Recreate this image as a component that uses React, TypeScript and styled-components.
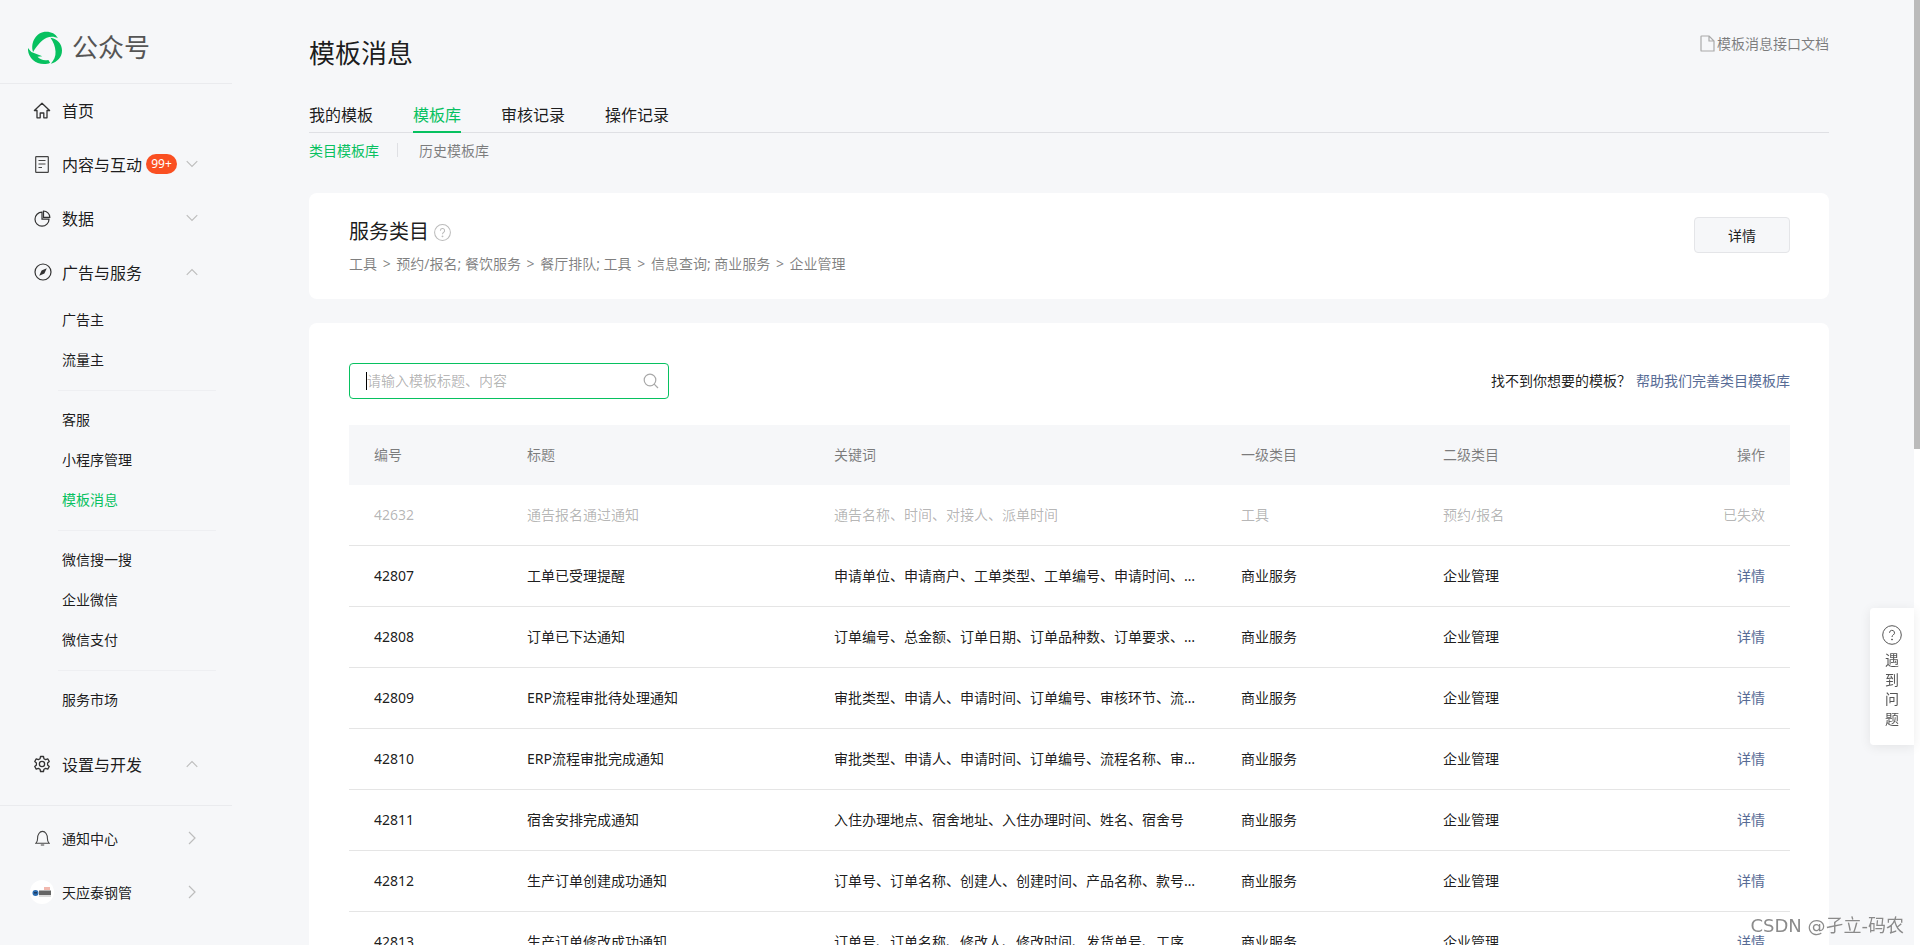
import React from "react";
import styled, { createGlobalStyle } from "styled-components";

const Global = createGlobalStyle`
  html, body { margin: 0; padding: 0; height: 100%; overflow: hidden; background: #f6f7f9; }
  body { font-family: "Noto Sans", "Noto Sans CJK SC", sans-serif; font-size: 14px; color: rgba(0,0,0,.9); }
  * { box-sizing: border-box; }
`;

const Shell = styled.div`
  display: flex;
  height: 100vh;
  overflow: hidden;
`;
const Sidebar = styled.aside`
  flex: 0 0 232px;
  display: flex;
  flex-direction: column;
`;
const Brand = styled.div`
  height: 84px;
  padding: 11px 0 0 28px;
  display: flex;
  align-items: center;
  gap: 10px;
  border-bottom: 1px solid #eaebee;
  font-size: 26px;
  color: #555;
  line-height: 1;
`;
const NavRow = styled.div`
  height: 54px;
  display: flex;
  align-items: center;
  padding: 0 0 2px 30px;
  font-size: ${(p: { $small?: boolean }) => (p.$small ? "14px" : "16px")};
  position: relative;
`;
const NavIcon = styled.span`
  width: 24px;
  height: 24px;
  display: flex;
  align-items: center;
  justify-content: center;
  margin-right: 8px;
  color: #333;
`;
const Chevron = styled.span`
  margin-left: auto;
  margin-right: 34px;
  width: 12px;
  display: flex;
  justify-content: center;
  color: #bdbdbd;
`;
const Badge = styled.span`
  margin-left: 4px;
  height: 20px;
  width: 31px;
  border-radius: 10px;
  background: #fa5022;
  color: #fff;
  font-size: 12px;
  line-height: 20px;
  text-align: center;
`;
const SubGroup = styled.div`
  margin: 0 16px 0 58px;
  padding: 0 0 10px;
  & + & {
    border-top: 1px solid #eeeff2;
    padding-top: 9px;
  }
`;
const SubItem = styled.div<{ $active?: boolean }>`
  height: 40px;
  line-height: 40px;
  padding-left: 4px;
  font-size: 14px;
  color: ${(p) => (p.$active ? "#07c160" : "rgba(0,0,0,.9)")};
`;
const SubList = styled.div`
  padding-bottom: 8px;
`;
const SideDivider = styled.div`
  height: 1px;
  background: #eaebee;
  margin: 13px 0 6px;
`;

const Main = styled.main`
  flex: 1;
  min-width: 0;
  padding: 0 85px 0 77px;
`;
const PageHead = styled.div`
  display: flex;
  justify-content: space-between;
  padding-top: 34px;
  height: 92px;
`;
const PageTitle = styled.h1`
  margin: 0;
  font-size: 26px;
  font-weight: 400;
  line-height: 39px;
`;
const DocLink = styled.a`
  display: flex;
  align-items: center;
  gap: 2px;
  height: 18px;
  font-size: 14px;
  color: rgba(0,0,0,.5);
`;
const TabBar = styled.div`
  display: flex;
  gap: 40px;
  height: 41px;
  border-bottom: 1px solid #dfe0e4;
`;
const Tab = styled.div<{ $active?: boolean }>`
  height: 41px;
  line-height: 47px;
  font-size: 16px;
  color: ${(p) => (p.$active ? "#07c160" : "rgba(0,0,0,.9)")};
  border-bottom: ${(p) => (p.$active ? "2px solid #07c160" : "none")};
`;
const SubTabs = styled.div`
  display: flex;
  align-items: center;
  height: 37px;
  padding-bottom: 3px;
  font-size: 14px;
`;
const SubTab = styled.span<{ $active?: boolean }>`
  color: ${(p) => (p.$active ? "#07c160" : "rgba(0,0,0,.5)")};
`;
const SubSep = styled.span`
  width: 1px;
  height: 14px;
  background: #dfe0e4;
  margin: 0 21px 0 18px;
`;
const Card = styled.section`
  background: #fff;
  border-radius: 8px;
  padding: 0 39px 0 40px;
`;
const CategoryCard = styled(Card)`
  margin-top: 23px;
  height: 106px;
  display: flex;
  align-items: flex-start;
  justify-content: space-between;
`;
const CategoryText = styled.div`
  padding-top: 23px;
`;
const CategoryTitle = styled.div`
  display: flex;
  align-items: center;
  gap: 5px;
  font-size: 20px;
  line-height: 32px;
`;
const Crumbs = styled.div`
  margin-top: 6px;
  font-size: 14px;
  line-height: 20px;
  color: rgba(0,0,0,.5);
`;
const Gt = styled.span`
  margin: 0 2px;
`;
const Button = styled.button`
  margin-top: 24px;
  width: 96px;
  height: 36px;
  background: #f6f7f9;
  border: 1px solid #e4e5e8;
  border-radius: 4px;
  font: inherit;
  font-size: 14px;
  color: rgba(0,0,0,.9);
`;
const ListCard = styled(Card)`
  margin-top: 24px;
  padding-top: 40px;
`;
const Toolbar = styled.div`
  display: flex;
  justify-content: space-between;
  align-items: center;
  height: 36px;
`;
const SearchBox = styled.div`
  width: 320px;
  height: 36px;
  border: 1px solid #07c160;
  border-radius: 4px;
  display: flex;
  align-items: center;
  padding: 0 9px 0 16px;
  color: #aaa;
`;
const Caret = styled.span`
  flex: none;
  width: 1px;
  height: 18px;
  background: #000;
`;
const SearchInput = styled.input`
  flex: 1;
  min-width: 0;
  border: 0;
  outline: 0;
  padding: 0 0 2px;
  background: transparent;
  font: inherit;
  font-size: 14px;
  &::placeholder { color: rgba(0,0,0,.3); }
`;
const Hint = styled.div`
  font-size: 14px;
  padding-bottom: 2px;
`;
const HelpLink = styled.a`
  color: #576b95;
  margin-left: 5px;
`;
const Table = styled.div`
  margin-top: 26px;
`;
const gridCols = "153px 307px 407px 202px 1fr 100px";
const HeadRow = styled.div`
  display: grid;
  grid-template-columns: ${gridCols};
  align-items: center;
  height: 60px;
  padding: 0 25px 2px;
  background: #f6f7f9;
  color: rgba(0,0,0,.5);
`;
const Row = styled.div<{ $off?: boolean }>`
  display: grid;
  grid-template-columns: ${gridCols};
  align-items: center;
  height: 61px;
  padding: 0 25px 2px;
  border-bottom: 1px solid #e5e5e5;
  color: ${(p) => (p.$off ? "rgba(0,0,0,.3)" : "rgba(0,0,0,.9)")};
`;
const Keywords = styled.div`
  max-width: 362px;
  overflow: hidden;
  white-space: nowrap;
  text-overflow: ellipsis;
`;
const Action = styled.div`
  text-align: right;
`;
const ActionLink = styled.a`
  color: #576b95;
`;

const Rail = styled.div`
  flex: 0 0 6px;
  background: #fff;
`;
const Thumb = styled.div`
  height: 449px;
  background: #bbb;
`;
const HelpWidget = styled.div`
  position: fixed;
  right: 6px;
  top: 608px;
  width: 44px;
  height: 137px;
  background: #fff;
  border-radius: 4px 0 0 4px;
  box-shadow: 0 2px 12px rgba(0,0,0,.08);
  display: flex;
  flex-direction: column;
  align-items: center;
  padding-top: 17px;
  color: #555;
`;
const HelpWord = styled.div`
  margin-top: 5px;
  width: 14px;
  font-size: 14px;
  line-height: 19.5px;
  text-align: center;
`;
const Watermark = styled.div`
  position: fixed;
  right: 16px;
  top: 913px;
  font-family: "DejaVu Sans", "Noto Sans CJK SC", sans-serif;
  font-size: 18px;
  line-height: 26px;
  color: rgba(90,90,90,.7);
  text-shadow: 0 0 2px rgba(255,255,255,.9);
  white-space: nowrap;
`;

const ChevronDown = () => (
  <svg width="13" height="8" viewBox="0 0 13 8" fill="none" stroke="currentColor" strokeWidth="1.2"><path d="M.8 1l5.7 5.7L12.2 1" /></svg>
);
const ChevronUp = () => (
  <svg width="13" height="8" viewBox="0 0 13 8" fill="none" stroke="currentColor" strokeWidth="1.2"><path d="M.8 7l5.7-5.7L12.2 7" /></svg>
);
const ChevronRight = () => (
  <svg width="8" height="14" viewBox="0 0 8 14" fill="none" stroke="currentColor" strokeWidth="1.2"><path d="M1 1l6 6-6 6" /></svg>
);
const Logo = () => (
  <svg width="34" height="33" viewBox="0 0 100 97" fill="#07c160">
    <path d="M15 62C6 34 24 2 54 2c15 0 27 6 34 19-10-5-22-6-33-1C40 27 27 42 15 62z" />
    <path d="M66 20c20 3 34 18 34 37 0 20-14 34-33 39 9-10 15-22 14-36-1-15-6-28-15-40z" />
    <path d="M0 50c-2 25 19 47 47 47 7 0 13-1 18-4l-5-8c-12 3-24 0-32-9l14-2L10 62C6 58 3 54 0 50z" />
  </svg>
);
const HomeIcon = () => (
  <svg width="18" height="17" viewBox="0 0 18 17" fill="none" stroke="#333" strokeWidth="1.3"><path d="M9 1.2L16.6 8.5H14V15.8H10.8V11H7.2V15.8H4V8.5H1.4Z" strokeLinejoin="round" /></svg>
);
const DocIcon = () => (
  <svg width="14" height="17" viewBox="0 0 14 17" fill="none" stroke="#444" strokeWidth="1.2"><rect x=".7" y=".7" width="12.6" height="15.6" rx=".6" /><path d="M3.5 4.5h7M3.5 8h7M3.5 11.5h3.5" /></svg>
);
const PieIcon = () => (
  <svg width="17" height="17" viewBox="0 0 17 17" fill="none" stroke="#333" strokeWidth="1.2"><path d="M8 2.2a7 7 0 1 0 7 7H8z" /><path d="M10 .7a6.5 6.5 0 0 1 6.3 6.3H10z" transform="translate(-.5 .3)" /></svg>
);
const CompassIcon = () => (
  <svg width="18" height="18" viewBox="0 0 18 18" fill="none" stroke="#333" strokeWidth="1.2" style={{ marginLeft: 2 }}><circle cx="9" cy="9" r="8" /><path d="M12.8 5.2L10.4 10.4 5.2 12.8 7.6 7.6z" fill="#333" stroke="none" /></svg>
);
const GearIcon = () => (
  <svg width="18" height="18" viewBox="0 0 24 24" fill="none" stroke="#333" strokeWidth="1.7" strokeLinejoin="round"><path d="M10 2h4l.6 3 2.2 1.2 2.9-1 2 3.5-2.3 2 .1 1.3-.1 1.3 2.3 2-2 3.5-2.9-1-2.2 1.2-.6 3h-4l-.6-3-2.2-1.2-2.9 1-2-3.5 2.3-2-.1-1.3.1-1.3-2.3-2 2-3.5 2.9 1L9.400 5z" /><circle cx="12" cy="12" r="3.500" /></svg>
);
const BellIcon = () => (
  <svg width="15" height="16" viewBox="0 0 15 16" fill="none" stroke="#444" strokeWidth="1.100"><path d="M1 13.200c1.300-1.200 1.600-2.400 1.600-5 0-3.600 1.900-6.800 4.900-6.800s4.900 3.200 4.900 6.800c0 2.600.3 3.800 1.600 5zM5.800 15h3.400" /></svg>
);
const Avatar = () => (
  <svg width="24" height="24" viewBox="0 0 24 24">
    <circle cx="12" cy="12" r="12" fill="#fff" />
    <circle cx="5.500" cy="13" r="3" fill="#2b6cb0" />
    <rect x="4" y="12" width="3" height="1.500" fill="#1e3a5f" />
    <rect x="9" y="10.500" width="12" height="4.500" fill="#666" />
    <rect x="9" y="15.500" width="12" height="1" fill="#bbb" />
    <rect x="14" y="7" width="6" height="3" fill="#f2b8ae" />
  </svg>
);
const FileIcon = () => (
  <svg width="15" height="17" viewBox="0 0 15 17" fill="none" stroke="#aaa" strokeWidth="1.200"><path d="M1.600 1h7.500L14 6v10H1.600a.6.6 0 0 1-.6-.6V1.600a.6.6 0 0 1 .6-.6zM9 1v5h5" /></svg>
);
const QuestionIcon = ({ size, color }: { size: number; color: string }) => (
  <svg width={size} height={size} viewBox="0 0 20 20" fill="none" stroke={color} strokeWidth={size > 18 ? 1 : 1.200}>
    <circle cx="10" cy="10" r="9.300" />
    <path d="M7.500 7.800a2.500 2.500 0 1 1 3.700 2.200c-.8.500-1.200 1-1.200 2" />
    <circle cx="10" cy="14.500" r=".5" fill={color} />
  </svg>
);
const SearchIcon = () => (
  <svg width="16" height="16" viewBox="0 0 16 16" fill="none" stroke="#a8a8a8" strokeWidth="1.200"><circle cx="7" cy="7" r="5.800" /><path d="M11.200 11.200l3.800 3.800" /></svg>
);

const rows = [
  { id: "42632", title: "通告报名通过通知", keys: "通告名称、时间、对接人、派单时间", a: "工具", b: "预约/报名", off: true },
  { id: "42807", title: "工单已受理提醒", keys: "申请单位、申请商户、工单类型、工单编号、申请时间、申请内容" },
  { id: "42808", title: "订单已下达通知", keys: "订单编号、总金额、订单日期、订单品种数、订单要求、订单备注" },
  { id: "42809", title: "ERP流程审批待处理通知", keys: "审批类型、申请人、申请时间、订单编号、审核环节、流程名称" },
  { id: "42810", title: "ERP流程审批完成通知", keys: "审批类型、申请人、申请时间、订单编号、流程名称、审批结果" },
  { id: "42811", title: "宿舍安排完成通知", keys: "入住办理地点、宿舍地址、入住办理时间、姓名、宿舍号" },
  { id: "42812", title: "生产订单创建成功通知", keys: "订单号、订单名称、创建人、创建时间、产品名称、款号、数量" },
  { id: "42813", title: "生产订单修改成功通知", keys: "订单号、订单名称、修改人、修改时间、发货单号、工序" },
];

export default function App() {
  return (
    <>
      <Global />
      <Shell>
        <Sidebar>
          <Brand><Logo />公众号</Brand>
          <NavRow><NavIcon><HomeIcon /></NavIcon>首页</NavRow>
          <NavRow><NavIcon><DocIcon /></NavIcon>内容与互动<Badge>99+</Badge><Chevron><ChevronDown /></Chevron></NavRow>
          <NavRow><NavIcon><PieIcon /></NavIcon>数据<Chevron><ChevronDown /></Chevron></NavRow>
          <NavRow><NavIcon><CompassIcon /></NavIcon>广告与服务<Chevron><ChevronUp /></Chevron></NavRow>
          <SubList>
            <SubGroup><SubItem>广告主</SubItem><SubItem>流量主</SubItem></SubGroup>
            <SubGroup><SubItem>客服</SubItem><SubItem>小程序管理</SubItem><SubItem $active>模板消息</SubItem></SubGroup>
            <SubGroup><SubItem>微信搜一搜</SubItem><SubItem>企业微信</SubItem><SubItem>微信支付</SubItem></SubGroup>
            <SubGroup><SubItem>服务市场</SubItem></SubGroup>
          </SubList>
          <NavRow><NavIcon><GearIcon /></NavIcon>设置与开发<Chevron><ChevronUp /></Chevron></NavRow>
          <SideDivider />
          <NavRow $small><NavIcon><BellIcon /></NavIcon>通知中心<Chevron><ChevronRight /></Chevron></NavRow>
          <NavRow $small><NavIcon><Avatar /></NavIcon>天应泰钢管<Chevron><ChevronRight /></Chevron></NavRow>
        </Sidebar>
        <Main>
          <PageHead>
            <PageTitle>模板消息</PageTitle>
            <DocLink><FileIcon />模板消息接口文档</DocLink>
          </PageHead>
          <TabBar>
            <Tab>我的模板</Tab>
            <Tab $active>模板库</Tab>
            <Tab>审核记录</Tab>
            <Tab>操作记录</Tab>
          </TabBar>
          <SubTabs>
            <SubTab $active>类目模板库</SubTab>
            <SubSep />
            <SubTab>历史模板库</SubTab>
          </SubTabs>
          <CategoryCard>
            <CategoryText>
              <CategoryTitle>服务类目<QuestionIcon size={17} color="#bbb" /></CategoryTitle>
              <Crumbs>工具 <Gt>&gt;</Gt> 预约/报名; 餐饮服务 <Gt>&gt;</Gt> 餐厅排队; 工具 <Gt>&gt;</Gt> 信息查询; 商业服务 <Gt>&gt;</Gt> 企业管理</Crumbs>
            </CategoryText>
            <Button>详情</Button>
          </CategoryCard>
          <ListCard>
            <Toolbar>
              <SearchBox><Caret /><SearchInput placeholder="请输入模板标题、内容" readOnly /><SearchIcon /></SearchBox>
              <Hint>找不到你想要的模板？<HelpLink>帮助我们完善类目模板库</HelpLink></Hint>
            </Toolbar>
            <Table>
              <HeadRow><div>编号</div><div>标题</div><div>关键词</div><div>一级类目</div><div>二级类目</div><Action>操作</Action></HeadRow>
              {rows.map((r) => (
                <Row key={r.id} $off={r.off}>
                  <div>{r.id}</div>
                  <div>{r.title}</div>
                  <Keywords>{r.keys}</Keywords>
                  <div>{r.a ?? "商业服务"}</div>
                  <div>{r.b ?? "企业管理"}</div>
                  <Action>{r.off ? "已失效" : <ActionLink>详情</ActionLink>}</Action>
                </Row>
              ))}
            </Table>
          </ListCard>
        </Main>
        <Rail><Thumb /></Rail>
      </Shell>
      <HelpWidget>
        <QuestionIcon size={20} color="#555" />
        <HelpWord>遇到问题</HelpWord>
      </HelpWidget>
      <Watermark>CSDN @孑立-码农</Watermark>
    </>
  );
}
